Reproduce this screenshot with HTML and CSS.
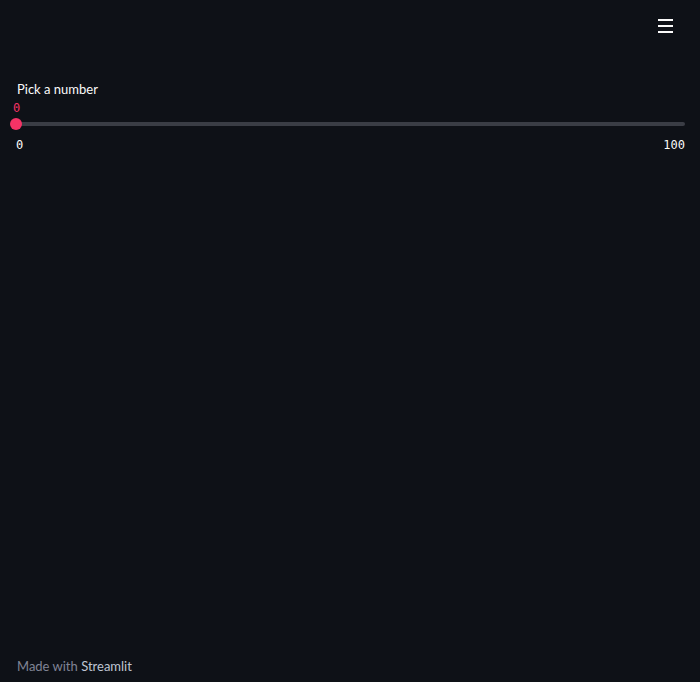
FILE: index.html
```html
<!DOCTYPE html>
<html lang="en">
<head>
  <meta charset="UTF-8">
  <title>Slider demo</title>
  <link rel="stylesheet" href="styles.css">
</head>
<body>
  <div class="app">
    <header class="topbar">
      <button class="menu-btn" aria-label="Main menu">
        <svg width="16" height="14" viewBox="0 0 16 14">
          <rect x="0" y="1" width="15" height="2" fill="#fafafa"/>
          <rect x="0" y="7" width="15" height="2" fill="#fafafa"/>
          <rect x="0" y="13" width="15" height="2" fill="#fafafa"/>
        </svg>
      </button>
    </header>

    <main class="main">
      <div class="slider">
        <label class="slider-label">Pick a number</label>
        <div class="slider-value">0</div>
        <div class="slider-track">
          <div class="slider-thumb"></div>
        </div>
        <div class="slider-ticks">
          <span>0</span>
          <span>100</span>
        </div>
      </div>
    </main>

    <footer class="footer">
      Made with <a href="#">Streamlit</a>
    </footer>
  </div>
</body>
</html>
```

FILE: styles.css
```css
html, body {
  height: 100%;
}
body {
  margin: 0;
  background-color: #0e1117;
  color: #fafafa;
  font-family: Lato, sans-serif;
}
.app {
  display: flex;
  flex-direction: column;
  min-height: 100vh;
}
.topbar {
  display: flex;
  justify-content: flex-end;
  padding: 18px 26px 0 0;
}
.menu-btn {
  background: none;
  border: none;
  padding: 0;
  width: 16px;
  height: 16px;
  cursor: pointer;
  display: flex;
}
.menu-btn svg {
  overflow: visible;
}
.main {
  padding: 46px 15px 0 16px;
}
.slider-label {
  display: block;
  font-size: 13px;
  line-height: 18px;
  padding-left: 1px;
}
.slider-value {
  font-family: "DejaVu Sans Mono", monospace;
  font-size: 12px;
  line-height: 16px;
  color: #f63366;
  margin-top: 2px;
  margin-left: -3px;
}
.slider-track {
  position: relative;
  height: 4px;
  margin-top: 6px;
  background-color: #3a3d45;
  border-radius: 2px;
}
.slider-thumb {
  position: absolute;
  left: -6px;
  top: -4px;
  width: 12px;
  height: 12px;
  border-radius: 50%;
  background-color: #f63366;
}
.slider-ticks {
  display: flex;
  justify-content: space-between;
  margin-top: 11px;
  font-family: "DejaVu Sans Mono", monospace;
  font-size: 12px;
  line-height: 16px;
}
.footer {
  margin-top: auto;
  padding: 0 16px 8px 17px;
  font-size: 13px;
  line-height: 16px;
  color: #808495;
}
.footer a {
  color: #bfc5d3;
  text-decoration: none;
}
```
